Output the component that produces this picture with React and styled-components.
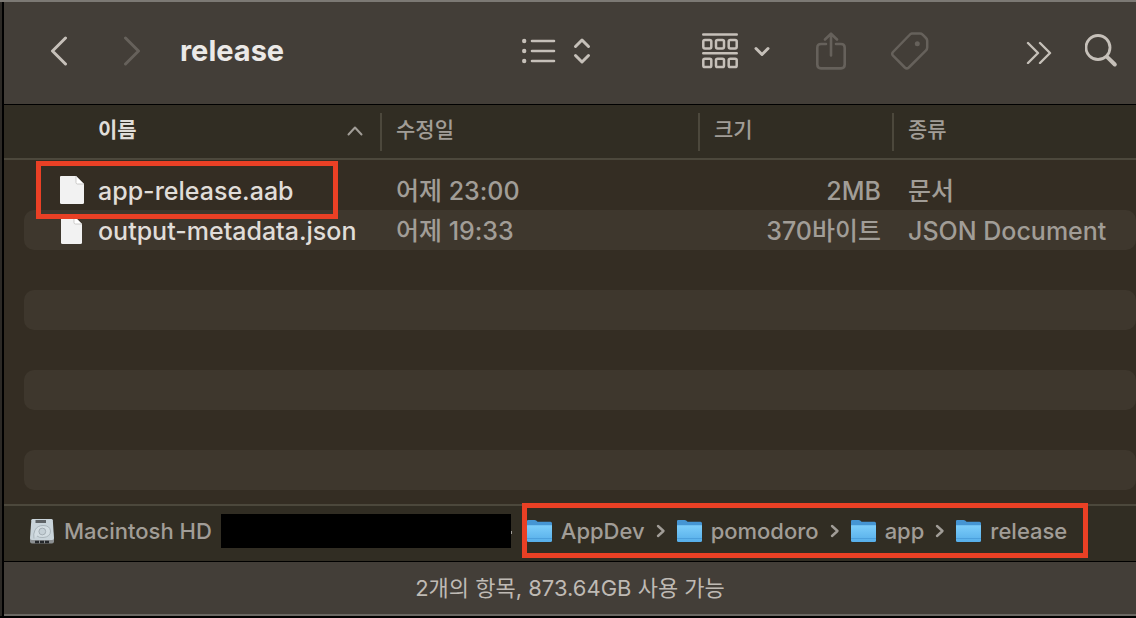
import React from "react";
import styled, { createGlobalStyle, css } from "styled-components";

const color = {
  chrome: "#433e38",
  header: "#312d23",
  list: "#342d23",
  stripe: "#3e372d",
  line: "#4c483c",
  icon: "#c6c0b9",
  iconOff: "#66615b",
  strong: "#e0ddd9",
  muted: "#a19d97",
  mark: "#ea4025",
};

const GlobalStyle = createGlobalStyle`
  * { box-sizing: border-box; }
  body {
    margin: 0;
    background: #000;
    font-family: Inter, "Noto Sans CJK KR", sans-serif;
    color: ${color.muted};
  }
  button { padding: 0; border: 0; background: none; font: inherit; color: inherit; }
  svg { display: block; flex: none; }
`;

const Desktop = styled.div`
  min-height: 100vh;
  display: flex;
  flex-direction: column;
  padding-left: 2px;
  border-top: 2px solid #7c7974;
  border-bottom: 2px solid #000;
  background: #2c2925;
`;

const Window = styled.main`
  flex: 1;
  display: flex;
  flex-direction: column;
  border-left: 2px solid #000;
`;

const Toolbar = styled.header`
  display: flex;
  align-items: center;
  height: 103px;
  padding: 0 18px 4px 46px;
  background: ${color.chrome};
  border-bottom: 1px solid #000;
`;

const Title = styled.h1`
  flex: 1;
  margin: 0 0 0 39px;
  font-size: 29px;
  line-height: 36px;
  font-weight: 700;
  color: #ebe9e7;
`;

const ToolButton = styled.button`
  display: flex;
  align-items: center;
  gap: ${(p) => p.$gap || 0}px;
  margin-left: ${(p) => p.$before || 0}px;
  color: ${(p) => (p.disabled ? color.iconOff : color.icon)};
`;

const Pane = styled.section`
  flex: 1;
  background: ${color.list};
`;

const FileTable = styled.table`
  width: 100%;
  table-layout: fixed;
  border-collapse: separate;
  border-spacing: 0;
  tbody::before {
    content: "";
    display: block;
    height: 10px;
  }
`;

const Column = styled.col`
  width: ${(p) => (p.$width ? `${p.$width}px` : "auto")};
`;

const HeadCell = styled.th`
  height: 55px;
  padding: 0;
  background: ${color.header};
  border-bottom: 2px solid ${color.line};
  text-align: left;
  font-weight: 500;
`;

const HeadButton = styled.button`
  display: flex;
  align-items: center;
  justify-content: space-between;
  width: 100%;
  height: 38px;
  padding: 0 17px 4px ${(p) => (p.$sorted ? 94 : 14)}px;
  font-size: 21px;
  line-height: 28px;
  ${(p) =>
    p.$sorted
      ? css`font-weight: 700; color: ${color.strong};`
      : css`border-left: 2px solid ${color.line};`}
  svg { color: ${color.muted}; }
`;

const Row = styled.tr`
  --fill: ${(p) => (p.$striped ? color.stripe : "transparent")};
`;

const Cell = styled.td`
  height: 40px;
  padding: 2px 11px 0 16px;
  background: var(--fill);
  font-size: 25px;
  line-height: 36px;
  font-weight: 500;
  white-space: nowrap;
  text-align: ${(p) => (p.$end ? "right" : "left")};
  &:last-child { border-radius: 0 10px 10px 0; }
`;

const NameCell = styled.td`
  position: relative;
  height: 40px;
  padding: 0 0 0 20px;
`;

const NameBox = styled.div`
  display: flex;
  align-items: center;
  gap: 13px;
  height: 40px;
  padding: 2px 0 0 35px;
  border-radius: 10px 0 0 10px;
  background: var(--fill);
  font-size: 25px;
  line-height: 36px;
  font-weight: 500;
  color: ${color.strong};
  white-space: nowrap;
`;

const FileMark = styled.span`
  position: absolute;
  z-index: 1;
  inset: -9px 42px -9px 32px;
  border: 5px solid ${color.mark};
`;

const PathBar = styled.nav`
  display: flex;
  align-items: center;
  height: 58px;
  padding: 0 25px 5px;
  background: ${color.header};
  border-top: 2px solid ${color.line};
  border-bottom: 1px solid #000;
  font-size: 22px;
  line-height: 32px;
  font-weight: 500;
  white-space: nowrap;
`;

const Crumb = styled.a`
  display: flex;
  align-items: center;
  gap: 9px;
  color: inherit;
  text-decoration: none;
`;

const Redacted = styled.span`
  position: relative;
  width: 290px;
  height: 34px;
  margin: 0 16px 0 9px;
  background: #000;
  &::after {
    content: "";
    position: absolute;
    left: 100%;
    top: 17px;
    width: 1px;
    height: 3px;
    background: ${color.muted};
  }
`;

const MarkedPath = styled.div`
  position: relative;
  display: flex;
  align-items: center;
  gap: 11px;
`;

const PathMark = styled.span`
  position: absolute;
  inset: -12px -21px -11px -5px;
  border: 5px solid ${color.mark};
`;

const StatusBar = styled.footer`
  height: 54px;
  display: flex;
  align-items: center;
  justify-content: center;
  background: ${color.chrome};
  border-bottom: 2px solid #6b6863;
  font-size: 22px;
  line-height: 30px;
  color: #bfbab4;
`;

function Stroke({ w, h, d, width = 3, children }) {
  return (
    <svg width={w} height={h} viewBox={`0 0 ${w} ${h}`} fill="none" stroke="currentColor"
      strokeWidth={width} strokeLinecap="round" strokeLinejoin="round" aria-hidden="true">
      {d && <path d={d} />}
      {children}
    </svg>
  );
}

const ListIcon = () => (
  <Stroke w={34} h={26} d="M10 3H32M10 13H32M10 23H32" width={2.6}>
    <g fill="currentColor" stroke="none">
      <circle cx="2.2" cy="3" r="2.2" />
      <circle cx="2.2" cy="13" r="2.2" />
      <circle cx="2.2" cy="23" r="2.2" />
    </g>
  </Stroke>
);

const GroupIcon = () => (
  <Stroke w={36} h={36} d="M1.3 1.5H34.7M1.3 20.2H34.7" width={2.6}>
    {[7, 25.7].map((y) =>
      [1.3, 14, 26.7].map((x) => (
        <rect key={`${x}-${y}`} x={x} y={y} width="8" height="8.4" rx="1.6" strokeWidth="2.5" />
      ))
    )}
  </Stroke>
);

const ShareIcon = () => (
  <Stroke w={30} h={38} width={2.6}
    d="M10 12H5Q1.3 12 1.3 15.7V32.6Q1.3 36.4 5 36.4H25Q28.7 36.4 28.7 32.6V15.7Q28.7 12 25 12H20M15 23.5V2M9 7.5L15 1.7L21 7.5" />
);

const TagIcon = () => (
  <Stroke w={38} h={38} width={2.5}
    d="M20.8 1.5H29Q30.5 1.5 31.6 2.6L35 6Q36.2 7.2 36.2 8.8V15.5Q36.2 17.2 35 18.4L17.8 35.5Q15.8 37.3 13.8 35.5L2 23.6Q.4 21.8 2 20L18.5 3Q19.5 1.8 20.8 1.5Z">
    <circle cx="26.3" cy="11.7" r="2.5" fill="currentColor" stroke="none" />
  </Stroke>
);

const SearchIcon = () => (
  <Stroke w={33} h={34}>
    <circle cx="13" cy="13.5" r="12" strokeWidth="2.8" />
    <path d="M22.3 23.1L29.8 30.5" strokeWidth="4" />
  </Stroke>
);

function FileIcon({ narrow }) {
  const x = narrow ? 2 : 1;
  const w = narrow ? 21 : 24;
  return (
    <svg width="26" height="30" viewBox="0 1 26 30" aria-hidden="true">
      <g transform={`translate(${x} 0)`}>
        <path d={`M1 1H${w - 8}L${w} 9V27.5Q${w} 29 ${w - 1.5} 29H1.5Q0 29 0 27.5V2Q0 1 1 1Z`} fill="#f2f2f2" />
        <path d={`M${w - 8} 1V7.5Q${w - 8} 9 ${w - 6.5} 9H${w}Z`} fill="#fff" stroke="#b9b8b6" strokeWidth=".7" />
      </g>
    </svg>
  );
}

function FolderIcon() {
  return (
    <svg width="25" height="24" viewBox="0 0 25 24" aria-hidden="true">
      <defs>
        <linearGradient id="folderFront" x1="0" y1="0" x2="0" y2="1">
          <stop offset="0" stopColor="#7ccdfa" />
          <stop offset="1" stopColor="#56aee9" />
        </linearGradient>
      </defs>
      <path d="M0 2Q0 1 1.2 1H7.5Q8.6 1 9.5 1.8L10.5 2.7H23.5Q25 2.7 25 4.2V12H0Z" fill="#4595d3" />
      <path d="M0 6.3H25V21.5Q25 23 23.5 23H1.5Q0 23 0 21.5Z" fill="url(#folderFront)" />
      <path d="M0 19.5H25" stroke="#479bd8" strokeWidth=".8" />
    </svg>
  );
}

function DriveIcon() {
  return (
    <svg width="26" height="27" viewBox="0 0 26 27" aria-hidden="true">
      <path d="M1 20H25V23.5Q25 25.5 23 25.5H3Q1 25.5 1 23.5Z" fill="#8b8f91" />
      <path d="M6 24H20" stroke="#24272a" strokeWidth="2.6" strokeDasharray="4 1" />
      <path d="M3.6 1H22.4Q23.6 1 23.8 2.2L25 20Q25 22 23 22H3Q1 22 1 20L2.3 2.2Q2.5 1 3.6 1Z" fill="#c9d4da" />
      <path d="M6.5 2H17V5H6.5Z" fill="#5d6265" />
      <path d="M5 20.5Q4 16 6 12Q8.5 7.5 14 7.5Q21 7.5 21.5 13Q21.5 19 14 19.5Q10 19.8 8 18" fill="#d3dde2" stroke="#a0abb1" strokeWidth=".8" />
      <circle cx="13.3" cy="13.5" r="3.4" fill="#c5d0d6" stroke="#9aa5ab" strokeWidth=".8" />
    </svg>
  );
}

const files = [
  { name: "app-release.aab", date: "어제 23:00", size: "2MB", kind: "문서", marked: true },
  { name: "output-metadata.json", date: "어제 19:33", size: "370바이트", kind: "JSON Document", narrow: true },
];
const emptyRows = [2, 3, 4, 5, 6, 7];
const folders = ["AppDev", "pomodoro", "app", "release"];

export default function App() {
  return (
    <>
      <GlobalStyle />
      <Desktop>
        <Window>
          <Toolbar>
            <ToolButton aria-label="뒤로">
              <Stroke w={18} h={30} d="M15.5 2L2.5 15L15.5 28" />
            </ToolButton>
            <ToolButton aria-label="앞으로" disabled $before={55}>
              <Stroke w={18} h={30} d="M2.5 2L15.5 15L2.5 28" />
            </ToolButton>
            <Title>release</Title>
            <ToolButton aria-label="목록 보기" $gap={17}>
              <ListIcon />
              <Stroke w={18} h={28} d="M2.5 9.5L9 3L15.5 9.5M2.5 18.5L9 25L15.5 18.5" />
            </ToolButton>
            <ToolButton aria-label="그룹" $gap={16} $before={111}>
              <GroupIcon />
              <Stroke w={16} h={12} d="M2 3.5L8 9.5L14 3.5" />
            </ToolButton>
            <ToolButton aria-label="공유" disabled $before={46}><ShareIcon /></ToolButton>
            <ToolButton aria-label="태그" disabled $before={45}><TagIcon /></ToolButton>
            <ToolButton aria-label="더 보기" $before={97}>
              <Stroke w={26} h={26} d="M2 5L12 15L2 25M14 5L24 15L14 25" width={2.4} />
            </ToolButton>
            <ToolButton aria-label="검색" $before={33}><SearchIcon /></ToolButton>
          </Toolbar>

          <Pane>
            <FileTable>
              <colgroup>
                <Column $width={376} />
                <Column $width={318} />
                <Column $width={194} />
                <Column />
              </colgroup>
              <thead>
                <tr>
                  <HeadCell scope="col" aria-sort="ascending">
                    <HeadButton $sorted>
                      이름
                      <Stroke w={16} h={12} d="M1.5 10.5L8 3.5L14.5 10.5" width={2} />
                    </HeadButton>
                  </HeadCell>
                  <HeadCell scope="col"><HeadButton>수정일</HeadButton></HeadCell>
                  <HeadCell scope="col"><HeadButton>크기</HeadButton></HeadCell>
                  <HeadCell scope="col"><HeadButton>종류</HeadButton></HeadCell>
                </tr>
              </thead>
              <tbody>
                {files.map((f, i) => (
                  <Row key={f.name} $striped={i % 2 === 1}>
                    <NameCell>
                      <NameBox><FileIcon narrow={f.narrow} />{f.name}</NameBox>
                      {f.marked && <FileMark />}
                    </NameCell>
                    <Cell>{f.date}</Cell>
                    <Cell $end>{f.size}</Cell>
                    <Cell>{f.kind}</Cell>
                  </Row>
                ))}
                {emptyRows.map((i) => (
                  <Row key={i} $striped={i % 2 === 1} aria-hidden="true">
                    <NameCell><NameBox /></NameCell>
                    <Cell /><Cell /><Cell />
                  </Row>
                ))}
              </tbody>
            </FileTable>
          </Pane>

          <PathBar aria-label="경로">
            <Crumb href="#"><DriveIcon />Macintosh HD</Crumb>
            <Redacted />
            <MarkedPath>
              {folders.map((name, i) => (
                <React.Fragment key={name}>
                  {i > 0 && <Stroke w={10} h={14} d="M2 2L7.5 7L2 12" width={2.4} />}
                  <Crumb href="#"><FolderIcon />{name}</Crumb>
                </React.Fragment>
              ))}
              <PathMark />
            </MarkedPath>
          </PathBar>
          <StatusBar>2개의 항목, 873.64GB 사용 가능</StatusBar>
        </Window>
      </Desktop>
    </>
  );
}
